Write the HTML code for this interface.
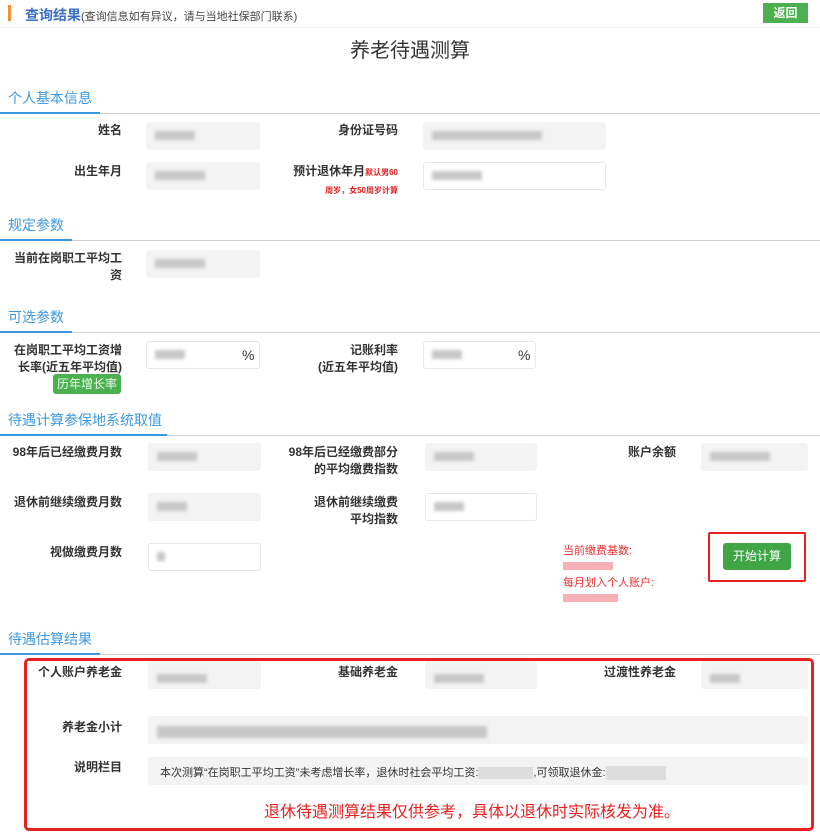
<!DOCTYPE html>
<html><head><meta charset="utf-8"><style>
*{margin:0;padding:0;box-sizing:border-box}
body{width:820px;height:840px;position:relative;background:#fff;font-family:"Liberation Sans","Noto Sans CJK SC",sans-serif;overflow:hidden;color:#333}
.a{position:absolute}
.lb{position:absolute;font-size:12px;font-weight:bold;text-align:right;line-height:17px;color:#333}
.in{position:absolute;height:28px;background:#f3f3f3;border-radius:3px}
.wi{position:absolute;height:28px;background:#fff;border:1px solid #e8e8e8;border-radius:3px}
.bl{position:absolute;height:9px;background:#c8c8c8;filter:blur(1.5px)}
.sec{position:absolute;left:8px;font-size:14px;color:#3d98e0}
.ln{position:absolute;left:0;width:820px;height:1px;background:#cfcfcf}
.bu{position:absolute;left:0;height:2px;background:#3d98e0}
</style></head><body>
<div class="a" style="left:8px;top:5px;width:3px;height:16px;background:#f0922e"></div>
<div class="a" style="left:25px;top:5px;font-size:14px;font-weight:bold;color:#3a6fc4">查询结果<span style="font-size:11px;font-weight:normal;color:#444">(查询信息如有异议，请与当地社保部门联系)</span></div>
<div class="a" style="left:763px;top:3px;width:45px;height:20px;background:#4cb050;color:#fff;font-size:12px;font-weight:bold;text-align:center;line-height:20px">返回</div>
<div class="a" style="left:0;top:27px;width:820px;height:1px;background:#eee"></div>
<div class="a" style="left:0;top:34px;width:820px;text-align:center;font-size:20px;color:#333">养老待遇测算</div>

<div class="sec" style="top:88px">个人基本信息</div><div class="ln" style="top:113px"></div><div class="bu" style="top:112px;width:100px"></div>
<div class="lb" style="left:20px;width:102px;top:122px">姓名</div>
<div class="in" style="left:146px;top:122px;width:114px"></div><div class="bl" style="left:155px;top:131px;width:40px"></div>
<div class="lb" style="left:280px;width:118px;top:122px">身份证号码</div>
<div class="in" style="left:423px;top:122px;width:183px"></div><div class="bl" style="left:432px;top:131px;width:110px"></div>
<div class="lb" style="left:20px;width:102px;top:163px">出生年月</div>
<div class="in" style="left:146px;top:162px;width:114px"></div><div class="bl" style="left:155px;top:171px;width:50px"></div>
<div class="lb" style="left:260px;width:138px;top:163px">预计退休年月<span style="color:#e02020;font-size:8px">默认男60</span><br><span style="color:#e02020;font-size:8px">周岁，女50周岁计算</span></div>
<div class="wi" style="left:423px;top:162px;width:183px"></div><div class="bl" style="left:432px;top:171px;width:50px"></div>

<div class="sec" style="top:215px">规定参数</div><div class="ln" style="top:240px"></div><div class="bu" style="top:239px;width:72px"></div>
<div class="lb" style="left:0;width:122px;top:250px">当前在岗职工平均工<br>资</div>
<div class="in" style="left:146px;top:250px;width:114px"></div><div class="bl" style="left:155px;top:259px;width:50px"></div>

<div class="sec" style="top:307px">可选参数</div><div class="ln" style="top:332px"></div><div class="bu" style="top:331px;width:72px"></div>
<div class="lb" style="left:0;width:122px;top:342px">在岗职工平均工资增<br>长率(近五年平均值)</div>
<div class="a" style="left:53px;top:374px;width:68px;height:20px;background:#4cb050;border-radius:3px;color:#eaffea;font-size:12px;text-align:center;line-height:20px">历年增长率</div>
<div class="wi" style="left:146px;top:341px;width:114px"></div><div class="bl" style="left:155px;top:350px;width:30px"></div><div class="a" style="left:242px;top:347px;font-size:14px">%</div>
<div class="lb" style="left:280px;width:118px;top:342px">记账利率<br>(近五年平均值)</div>
<div class="wi" style="left:423px;top:341px;width:113px"></div><div class="bl" style="left:432px;top:350px;width:30px"></div><div class="a" style="left:518px;top:347px;font-size:14px">%</div>

<div class="sec" style="top:410px">待遇计算参保地系统取值</div><div class="ln" style="top:435px"></div><div class="bu" style="top:434px;width:167px"></div>
<div class="lb" style="left:0;width:122px;top:444px">98年后已经缴费月数</div>
<div class="in" style="left:148px;top:443px;width:113px"></div><div class="bl" style="left:157px;top:452px;width:40px"></div>
<div class="lb" style="left:270px;width:128px;top:444px">98年后已经缴费部分<br>的平均缴费指数</div>
<div class="in" style="left:425px;top:443px;width:112px"></div><div class="bl" style="left:434px;top:452px;width:40px"></div>
<div class="lb" style="left:560px;width:116px;top:444px">账户余额</div>
<div class="in" style="left:701px;top:443px;width:107px"></div><div class="bl" style="left:710px;top:452px;width:60px"></div>
<div class="lb" style="left:0;width:122px;top:494px">退休前继续缴费月数</div>
<div class="in" style="left:148px;top:493px;width:113px"></div><div class="bl" style="left:157px;top:502px;width:30px"></div>
<div class="lb" style="left:270px;width:128px;top:494px">退休前继续缴费<br>平均指数</div>
<div class="wi" style="left:425px;top:493px;width:112px"></div><div class="bl" style="left:434px;top:502px;width:30px"></div>
<div class="lb" style="left:0;width:122px;top:544px">视做缴费月数</div>
<div class="wi" style="left:148px;top:543px;width:113px"></div><div class="bl" style="left:157px;top:552px;width:8px"></div>
<div class="a" style="left:563px;top:543px;font-size:11px;color:#e83030;line-height:16px">当前缴费基数:<br><span style="display:inline-block;width:50px;height:8px;background:#f6b0b8"></span><br>每月划入个人账户:<br><span style="display:inline-block;width:55px;height:8px;background:#f6b0b8"></span></div>
<div class="a" style="left:708px;top:532px;width:98px;height:50px;border:2px solid #e82020;border-radius:2px"></div>
<div class="a" style="left:723px;top:543px;width:68px;height:27px;background:#3fa545;border-radius:3px;color:#fff;font-size:12px;text-align:center;line-height:27px">开始计算</div>

<div class="sec" style="top:629px">待遇估算结果</div><div class="ln" style="top:654px"></div><div class="bu" style="top:653px;width:100px"></div>
<div class="a" style="left:24px;top:658px;width:790px;height:173px;border:3px solid #e82020;border-radius:5px"></div>
<div class="lb" style="left:20px;width:102px;top:664px">个人账户养老金</div>
<div class="in" style="left:148px;top:661px;width:113px"></div><div class="bl" style="left:157px;top:674px;width:50px"></div>
<div class="lb" style="left:280px;width:118px;top:664px">基础养老金</div>
<div class="in" style="left:425px;top:661px;width:112px"></div><div class="bl" style="left:434px;top:674px;width:50px"></div>
<div class="lb" style="left:560px;width:116px;top:664px">过渡性养老金</div>
<div class="in" style="left:701px;top:661px;width:107px"></div><div class="bl" style="left:710px;top:674px;width:30px"></div>
<div class="lb" style="left:20px;width:102px;top:719px">养老金小计</div>
<div class="in" style="left:148px;top:716px;width:660px"></div><div class="bl" style="left:157px;top:726px;width:330px;height:12px"></div>
<div class="lb" style="left:20px;width:102px;top:759px">说明栏目</div>
<div class="in" style="left:148px;top:757px;width:660px"></div>
<div class="a" style="left:160px;top:764px;font-size:11px;color:#333">本次测算“在岗职工平均工资”未考虑增长率，退休时社会平均工资:<span style="display:inline-block;width:55px;height:12px;background:#ddd;vertical-align:middle"></span>,可领取退休金:<span style="display:inline-block;width:60px;height:14px;background:#ddd;vertical-align:middle"></span></div>
<div class="a" style="left:264px;top:798px;font-size:16px;color:#e82020">退休待遇测算结果仅供参考，具体以退休时实际核发为准。</div>
</body></html>
